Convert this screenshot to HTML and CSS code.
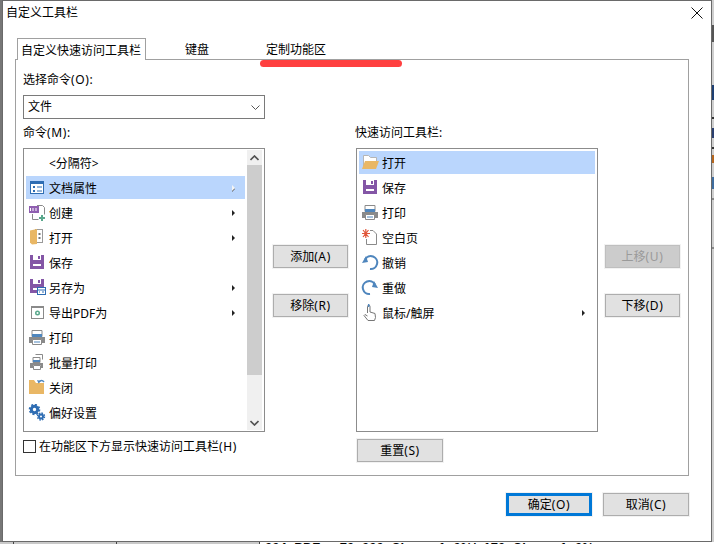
FILE: index.html
```html
<!DOCTYPE html>
<html lang="zh-CN">
<head>
<meta charset="utf-8">
<title>自定义工具栏</title>
<link rel="stylesheet" href="styles.css">
</head>
<body>
<svg class="defs" width="0" height="0" aria-hidden="true">
  <defs>
    <symbol id="i-save" viewBox="0 0 18 18">
      <rect x="2" y="1" width="14" height="14" fill="#8456a6"/>
      <rect x="5" y="1" width="8" height="5" fill="#fff"/>
      <rect x="10" y="2" width="2" height="3" fill="#8456a6"/>
      <rect x="5" y="10" width="8" height="2" fill="#fff"/>
    </symbol>
    <symbol id="i-print" viewBox="0 0 18 18">
      <path d="M4 1.500h10v6H4z" fill="#fff" stroke="#8a8a8a"/>
      <rect x="4" y="5" width="10" height="3" fill="#4f86bd"/>
      <path d="M1 8h16v6h-3v-3H4v3H1z" fill="#8a8a8a"/>
      <path d="M4.500 10.500h9v5h-9z" fill="#fff" stroke="#8a8a8a"/>
      <path d="M6 13h6" stroke="#4f86bd"/>
    </symbol>
  </defs>
</svg>

<div class="edge edge-left"></div>
<div class="edge edge-right"></div>
<div class="edge-bottom"><span class="backdrop-text">004 PDF : 70 000 Clever 1 0%/ 170 Clever 1 0%</span></div>

<main class="dialog">
  <header class="titlebar">
    <span>自定义工具栏</span>
    <svg class="close" width="12" height="12" viewBox="0 0 12 12"><path d="M.5.500l11 11M11.500.500l-11 11" stroke="#111" fill="none"/></svg>
  </header>

  <nav class="tabs">
    <div class="tab tab-active">自定义快速访问工具栏</div>
    <div class="tab tab-plain tab-second">键盘</div>
    <div class="tab tab-plain">定制功能区</div>
  </nav>

  <section class="pane">
    <div class="chooser">
      <label class="label">选择命令<span class="key">(O):</span></label>
      <div class="select">
        <span class="select-value">文件</span>
        <svg width="9" height="5" viewBox="0 0 9 5"><path d="M.5.500l4 4 4-4" fill="none" stroke="#555"/></svg>
      </div>
      <label class="label label-cmd">命令<span class="key">(M):</span></label>
    </div>
    <label class="label label-quick">快速访问工具栏:</label>

    <div class="list list-left">
      <ul class="rows">
        <li class="row"><span class="slot"></span>&lt;分隔符&gt;</li>
        <li class="row row-on">
          <svg class="ico" viewBox="0 0 18 18"><rect x="2.500" y="2.500" width="13" height="12" fill="#fff" stroke="#2f6db3"/><rect x="2" y="2" width="14" height="3" fill="#2f6db3"/><rect x="5" y="7" width="2" height="2" fill="#2f6db3"/><rect x="5" y="11" width="2" height="2" fill="#2f6db3"/><path d="M9 8h5M9 12h5" stroke="#2f6db3"/></svg>
          文档属性<i class="arrow arrow-light"></i>
        </li>
        <li class="row">
          <svg class="ico" viewBox="0 0 18 18"><path d="M9 1.500h5.500l2 2v7M4.500 10v5.500h6" fill="none" stroke="#8a8a8a"/><rect x="1" y="2" width="10" height="7" fill="#8f5fb0"/><path d="M2.500 4v3M5 4v3M8 4v3" stroke="#fff"/><path d="M11 14h6M14 11v6" stroke="#5aa88c" stroke-width="2"/></svg>
          创建<i class="arrow"></i>
        </li>
        <li class="row">
          <svg class="ico" viewBox="0 0 18 18"><rect x="7.500" y=".5" width="7" height="13" fill="#fff" stroke="#9a9a9a"/><path d="M2 1.500L9 0v15l-5 .5-2-2z" fill="#e9b765"/><rect x="10.500" y="4" width="2" height="2" fill="#777"/><rect x="10.500" y="8" width="2" height="2" fill="#777"/></svg>
          打开<i class="arrow"></i>
        </li>
        <li class="row"><svg class="ico"><use href="#i-save"/></svg>保存</li>
        <li class="row">
          <svg class="ico" viewBox="0 0 18 18"><rect x="2" y="0" width="14" height="14" fill="#8456a6"/><rect x="5" y="0" width="8" height="5" fill="#fff"/><rect x="10" y="1" width="2" height="3" fill="#8456a6"/><rect x="5" y="9" width="5" height="2" fill="#fff"/><rect x="9.500" y="8.500" width="8" height="7" fill="#fff" stroke="#2f6db3"/><path d="M10 11h7M11 13h1M14 13h2" stroke="#2f6db3"/></svg>
          另存为<i class="arrow"></i>
        </li>
        <li class="row">
          <svg class="ico" viewBox="0 0 18 18"><rect x="3.500" y="2.500" width="12" height="12" fill="#fff" stroke="#8a8a8a"/><rect x="3" y="2" width="13" height="2" fill="#8a8a8a"/><circle cx="9.500" cy="9" r="2.500" fill="#5aa88c"/><circle cx="9.500" cy="9" r="1" fill="#fff"/></svg>
          导出PDF为<i class="arrow"></i>
        </li>
        <li class="row"><svg class="ico"><use href="#i-print"/></svg>打印</li>
        <li class="row">
          <svg class="ico" viewBox="0 0 18 18"><path d="M7.500 .5h7v5M5 3.500h7v5H5z" fill="none" stroke="#8a8a8a"/><rect x="5" y="6" width="7" height="2" fill="#4f86bd"/><path d="M2 9h13v5h-2v-3H5v3H2z" fill="#8a8a8a"/><path d="M5.500 11.500h7v4h-7z" fill="#fff" stroke="#8a8a8a"/></svg>
          批量打印
        </li>
        <li class="row">
          <svg class="ico" viewBox="0 0 18 18"><path d="M1 1h5l2 3h8v11H1z" fill="#e9b765"/><path d="M8 0h10v4H8z" fill="#fff"/><path d="M16 3c-1.500-2-3.500-2-5 0" fill="none" stroke="#4f86bd" stroke-width="1.500"/><path d="M9 1l1.500 3.500 2.500-2.500z" fill="#4f86bd"/></svg>
          关闭
        </li>
        <li class="row">
          <svg class="ico" viewBox="0 0 18 18"><circle cx="6.500" cy="5.500" r="3.200" fill="none" stroke="#2f6db3" stroke-width="3"/><circle cx="6.500" cy="5.500" r="5" fill="none" stroke="#2f6db3" stroke-width="1.600" stroke-dasharray="2 1.900"/><circle cx="13" cy="12.500" r="2" fill="none" stroke="#2f6db3" stroke-width="2"/><circle cx="13" cy="12.500" r="3.500" fill="none" stroke="#2f6db3" stroke-width="1.400" stroke-dasharray="1.600 1.150"/></svg>
          偏好设置
        </li>
      </ul>
      <div class="scrollbar">
        <div class="sb-btn"><svg width="9" height="6" viewBox="0 0 9 6"><path d="M.5 5l4-4 4 4" fill="none" stroke="#505050" stroke-width="1.600"/></svg></div>
        <div class="sb-thumb"></div>
        <div class="sb-btn sb-btn-end"><svg width="9" height="6" viewBox="0 0 9 6"><path d="M.5 1l4 4 4-4" fill="none" stroke="#505050" stroke-width="1.600"/></svg></div>
      </div>
    </div>

    <div class="side side-mid">
      <button class="btn">添加<span class="key">(A)</span></button>
      <button class="btn">移除<span class="key">(R)</span></button>
    </div>

    <div class="list list-right">
      <ul class="rows rows-wide">
        <li class="row row-on">
          <svg class="ico" viewBox="0 0 18 18"><path d="M2.500 13V1.500h5l2 2h6V7" fill="#fff" stroke="#b5b5b5"/><path d="M1 15l3-8h14l-3 8z" fill="#e9b765"/></svg>
          打开
        </li>
        <li class="row"><svg class="ico"><use href="#i-save"/></svg>保存</li>
        <li class="row"><svg class="ico"><use href="#i-print"/></svg>打印</li>
        <li class="row">
          <svg class="ico" viewBox="0 0 18 18"><path d="M9 1.500h3l3.500 3.500v10.500h-10V10" fill="#fff" stroke="#8a8a8a"/><path d="M2 1l5.500 7M7.500 1L2 8M1 4.500h8M4.800 0v9" stroke="#e0573a" stroke-width="1.200"/><circle cx="4.800" cy="4.500" r="1.500" fill="#e0573a"/></svg>
          空白页
        </li>
        <li class="row">
          <svg class="ico" viewBox="0 0 18 18"><path d="M4 5.500A6.500 6.500 0 1 1 9 15" fill="none" stroke="#4f86bd" stroke-width="2"/><path d="M1 9l6-1-2-6z" fill="#4f86bd"/></svg>
          撤销
        </li>
        <li class="row">
          <svg class="ico" viewBox="0 0 18 18"><path d="M14 5.500A6.500 6.500 0 1 0 9 15" fill="none" stroke="#4f86bd" stroke-width="2"/><path d="M17 9l-6-1 2-6z" fill="#4f86bd"/></svg>
          重做
        </li>
        <li class="row">
          <svg class="ico" viewBox="0 0 18 18"><path d="M6.500 9V2.500a1.200 1.200 0 0 1 2.500 0V8l5 1.500.5 4-1 3H7l-4-5 1-1 2.500 1.500" fill="#fff" stroke="#777"/><path d="M7.700 0v3" stroke="#4f86bd" stroke-width="1.500"/></svg>
          鼠标/触屏<i class="arrow"></i>
        </li>
      </ul>
    </div>

    <div class="side side-end">
      <button class="btn btn-off" disabled>上移<span class="key">(U)</span></button>
      <button class="btn">下移<span class="key">(D)</span></button>
    </div>

    <div class="check-row">
      <span class="check"></span>
      <span>在功能区下方显示快速访问工具栏<span class="key">(H)</span></span>
    </div>
    <button class="btn btn-wide btn-reset">重置<span class="key">(S)</span></button>
  </section>

  <footer class="footer">
    <button class="btn btn-wide btn-default">确定<span class="key">(O)</span></button>
    <button class="btn btn-wide">取消<span class="key">(C)</span></button>
  </footer>
</main>

<div class="marker"></div>
</body>
</html>
```

FILE: styles.css
```css
* { box-sizing: border-box; }

html, body {
  margin: 0;
  padding: 0;
}

body {
  position: relative;
  width: 714px;
  height: 544px;
  overflow: hidden;
  background: #c9c9c9;
  color: #000;
  font: 12px/16px "Noto Sans", "Noto Sans CJK SC", "Liberation Sans", sans-serif;
}

.defs { position: absolute; }

.key { letter-spacing: .6px; }

/* what shows of the desktop behind the dialog */
.edge { position: absolute; top: 0; height: 544px; }
.edge-left { left: 0; width: 2px; background: #777; }
.edge-right {
  left: 712px;
  width: 2px;
  background: linear-gradient(#cfcfcf 0 25px, #555 25px 42px, #cfcfcf 42px 85px, #1d3f73 85px 100px, #cfcfcf 100px 117px, #333 117px 119px, #cfcfcf 119px 128px, #2a3f70 128px 138px, #cfcfcf 138px 147px, #333 147px 149px, #cfcfcf 149px 155px, #b5651d 155px 163px, #cfcfcf 163px 177px, #3f6d9f 177px 189px, #cfcfcf 189px 198px, #888 198px 200px, #cfcfcf 200px 247px, #888 247px 249px, #cfcfcf 249px);
}
.edge-bottom {
  position: absolute;
  left: 0;
  top: 542px;
  width: 714px;
  height: 2px;
  overflow: hidden;
  background: linear-gradient(90deg, #c9c9c9 0 13px, #444 13px 14px, #c9c9c9 14px 116px, #444 116px 117px, #c9c9c9 117px 259px, #444 259px 260px, #fff 260px);
}
.backdrop-text {
  position: absolute;
  left: 265px;
  top: -2px;
  font: bold 13px/15px "Liberation Sans", sans-serif;
  white-space: nowrap;
  word-spacing: 4px;
}

/* dialog window */
.dialog {
  position: absolute;
  left: 2px;
  top: 0;
  width: 710px;
  height: 542px;
  background: #fff;
  border: 1px solid #6a6a6a;
}

.titlebar {
  display: flex;
  justify-content: space-between;
  align-items: flex-start;
  height: 37px;
  padding: 4px 8px 0 3px;
}
.close { display: block; margin-top: 2px; }

.tabs {
  position: relative;
  z-index: 1;
  display: flex;
  height: 22px;
  margin: 0 0 -1px 14px;
}
.tab { height: 22px; line-height: 23px; }
.tab-active {
  width: 129px;
  padding: 0 4px 0 3px;
  background: #fff;
  border: 1px solid #a0a0a0;
  border-bottom: 0;
}
.tab-plain { padding: 0 28px 0 29px; }
.tab-second { margin-left: 10px; }

.pane {
  display: grid;
  grid-template-columns: 250px 83px 249px 75px;
  align-content: start;
  width: 674px;
  margin-left: 12px;
  padding: 12px 0 13px 7px;
  border: 1px solid #a0a0a0;
}

.label { display: block; height: 16px; }
.chooser { grid-column: 1 / 5; }
.label-cmd { margin-top: 6px; }
.label-quick { grid-column: 3; margin: -16px 0 0 -1px; }

.select {
  display: flex;
  justify-content: space-between;
  align-items: center;
  width: 242px;
  height: 24px;
  margin-top: 7px;
  padding: 0 4px;
  border: 1px solid #7a7a7a;
}
.select-value { margin-bottom: 1px; }

.list {
  display: flex;
  width: 242px;
  height: 284px;
  margin-top: 7px;
  padding: 2px 1px 1px 2px;
  background: #fff;
  border: 1px solid #8c8c8c;
}
.list-left { grid-column: 1; }
.list-right { grid-column: 3; }

.rows {
  display: flex;
  flex-direction: column;
  gap: 2px;
  flex: none;
  width: 219px;
  margin: 0;
  padding: 0;
  list-style: none;
}
.rows-wide { width: 236px; }

.row {
  display: flex;
  align-items: center;
  flex: none;
  height: 23px;
  padding: 2px 10px 0 0;
}
.row-on { background: #bad6fd; }

.ico {
  display: block;
  flex: none;
  align-self: flex-start;
  width: 18px;
  height: 18px;
  margin: 1px 3px 0 2px;
}
.slot { flex: none; width: 23px; }

.arrow {
  width: 0;
  height: 0;
  margin-left: auto;
  margin-top: -2px;
  border-style: solid;
  border-width: 3px 0 3px 3px;
  border-color: transparent transparent transparent #222;
}
.arrow-light { border-left-color: #f4f4f4; filter: drop-shadow(0 1px 0 #555); }

.scrollbar {
  display: flex;
  flex-direction: column;
  flex: none;
  width: 15px;
  height: 280px;
  margin: -1px 0 0 2px;
  background: #f0f0f0;
}
.sb-btn {
  display: flex;
  justify-content: center;
  align-items: center;
  flex: none;
  height: 15px;
}
.sb-btn-end { margin-top: auto; }
.sb-thumb { flex: none; height: 210px; background: #cdcdcd; }

.side {
  display: flex;
  flex-direction: column;
  gap: 26px;
  margin-top: 7px;
  padding-top: 97px;
}
.side-mid { grid-column: 2; }
.side-end { grid-column: 4; grid-row: 3; }

.btn {
  display: block;
  width: 75px;
  height: 23px;
  padding: 0;
  font: inherit;
  color: #000;
  background: #e1e1e1;
  border: 1px solid #adadad;
  box-shadow: 0 0 0 1px #f2f2f2;
}
.btn-wide { width: 86px; }
.btn-off { color: #9a9a9a; background: #cccccc; border-color: #bfbfbf; }
.btn-default { border: 3px solid #0078d7; }
.btn-reset { grid-column: 3; margin: 7px 0 0 1px; }

.check-row {
  grid-column: 1;
  grid-row: 4;
  display: flex;
  align-items: flex-start;
  gap: 3px;
  margin-top: 7px;
  margin-right: -40px;
}
.check {
  flex: none;
  width: 13px;
  height: 13px;
  margin-top: 1px;
  background: #fff;
  border: 1px solid #333;
}

.footer {
  display: flex;
  justify-content: flex-end;
  gap: 11px;
  margin: 17px 22px 0 0;
}

/* hand-drawn red underline on top of the screenshot */
.marker {
  position: absolute;
  left: 260px;
  top: 60px;
  width: 142px;
  height: 7px;
  background: #ff4040;
  border-radius: 4px;
}
```
